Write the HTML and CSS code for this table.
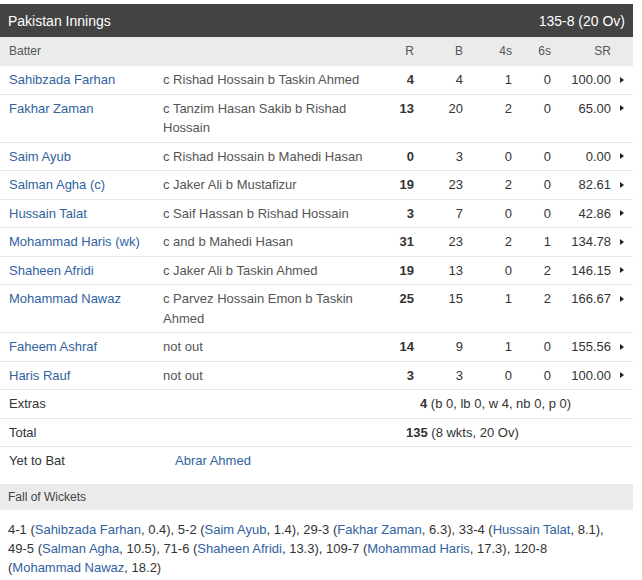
FILE: index.html
```html
<!DOCTYPE html>
<html lang="en">
<head>
<meta charset="utf-8">
<title>Pakistan Innings</title>
<link rel="stylesheet" href="styles.css">
</head>
<body>
<div class="card">
  <div class="inn-head"><span>Pakistan Innings</span><span>135-8 (20 Ov)</span></div>
  <table class="bat">
    <colgroup>
      <col class="w-name"><col class="w-dis"><col class="w-r"><col class="w-b"><col class="w-4"><col class="w-6"><col class="w-sr"><col class="w-arr">
    </colgroup>
    <thead>
      <tr><th class="name">Batter</th><th></th><th class="num">R</th><th class="num">B</th><th class="num">4s</th><th class="num">6s</th><th class="num">SR</th><th></th></tr>
    </thead>
    <tbody>
      <tr><td class="name"><a href="#">Sahibzada Farhan</a></td><td class="dis">c Rishad Hossain b Taskin Ahmed</td><td class="num runs">4</td><td class="num">4</td><td class="num">1</td><td class="num">0</td><td class="num">100.00</td><td class="arr"><span class="tri"></span></td></tr>
      <tr><td class="name"><a href="#">Fakhar Zaman</a></td><td class="dis">c Tanzim Hasan Sakib b Rishad Hossain</td><td class="num runs">13</td><td class="num">20</td><td class="num">2</td><td class="num">0</td><td class="num">65.00</td><td class="arr"><span class="tri"></span></td></tr>
      <tr><td class="name"><a href="#">Saim Ayub</a></td><td class="dis">c Rishad Hossain b Mahedi Hasan</td><td class="num runs">0</td><td class="num">3</td><td class="num">0</td><td class="num">0</td><td class="num">0.00</td><td class="arr"><span class="tri"></span></td></tr>
      <tr><td class="name"><a href="#">Salman Agha (c)</a></td><td class="dis">c Jaker Ali b Mustafizur</td><td class="num runs">19</td><td class="num">23</td><td class="num">2</td><td class="num">0</td><td class="num">82.61</td><td class="arr"><span class="tri"></span></td></tr>
      <tr><td class="name"><a href="#">Hussain Talat</a></td><td class="dis">c Saif Hassan b Rishad Hossain</td><td class="num runs">3</td><td class="num">7</td><td class="num">0</td><td class="num">0</td><td class="num">42.86</td><td class="arr"><span class="tri"></span></td></tr>
      <tr><td class="name"><a href="#">Mohammad Haris (wk)</a></td><td class="dis">c and b Mahedi Hasan</td><td class="num runs">31</td><td class="num">23</td><td class="num">2</td><td class="num">1</td><td class="num">134.78</td><td class="arr"><span class="tri"></span></td></tr>
      <tr><td class="name"><a href="#">Shaheen Afridi</a></td><td class="dis">c Jaker Ali b Taskin Ahmed</td><td class="num runs">19</td><td class="num">13</td><td class="num">0</td><td class="num">2</td><td class="num">146.15</td><td class="arr"><span class="tri"></span></td></tr>
      <tr><td class="name"><a href="#">Mohammad Nawaz</a></td><td class="dis">c Parvez Hossain Emon b Taskin Ahmed</td><td class="num runs">25</td><td class="num">15</td><td class="num">1</td><td class="num">2</td><td class="num">166.67</td><td class="arr"><span class="tri"></span></td></tr>
      <tr><td class="name"><a href="#">Faheem Ashraf</a></td><td class="dis">not out</td><td class="num runs">14</td><td class="num">9</td><td class="num">1</td><td class="num">0</td><td class="num">155.56</td><td class="arr"><span class="tri"></span></td></tr>
      <tr><td class="name"><a href="#">Haris Rauf</a></td><td class="dis">not out</td><td class="num runs">3</td><td class="num">3</td><td class="num">0</td><td class="num">0</td><td class="num">100.00</td><td class="arr"><span class="tri"></span></td></tr>
      <tr class="sum"><td class="name" colspan="2">Extras</td><td class="extras-val" colspan="6"><b>4</b> (b 0, lb 0, w 4, nb 0, p 0)</td></tr>
      <tr class="sum"><td class="name" colspan="2">Total</td><td class="total-val" colspan="6"><b>135</b> (8 wkts, 20 Ov)</td></tr>
      <tr class="sum last"><td class="name">Yet to Bat</td><td class="ytb" colspan="7"><a href="#">Abrar Ahmed</a></td></tr>
    </tbody>
  </table>
  <div class="fow-head">Fall of Wickets</div>
  <p class="fow">4-1 (<a href="#">Sahibzada Farhan</a>, 0.4), 5-2 (<a href="#">Saim Ayub</a>, 1.4), 29-3 (<a href="#">Fakhar Zaman</a>, 6.3), 33-4 (<a href="#">Hussain Talat</a>, 8.1), 49-5 (<a href="#">Salman Agha</a>, 10.5), 71-6 (<a href="#">Shaheen Afridi</a>, 13.3), 109-7 (<a href="#">Mohammad Haris</a>, 17.3), 120-8 (<a href="#">Mohammad Nawaz</a>, 18.2)</p>
</div>
</body>
</html>
```
FILE: styles.css
```css
html, body {
  margin: 0;
  padding: 0;
  background: #fff;
}
body {
  font-family: "Liberation Sans", Arial, sans-serif;
  font-size: 13px;
  color: #333;
}
a {
  color: #31629f;
  text-decoration: none;
}
.card {
  width: 633px;
  padding-top: 4px;
}
.inn-head {
  display: flex;
  justify-content: space-between;
  background: #434343;
  color: #fff;
  font-size: 14px;
  line-height: 20px;
  padding: 7px 8px 6px 8px;
}
.bat {
  width: 633px;
  table-layout: fixed;
  border-collapse: collapse;
}
.w-name { width: 155px; }
.w-dis { width: 226px; }
.w-r { width: 41px; }
.w-b { width: 49px; }
.w-4 { width: 49px; }
.w-6 { width: 39px; }
.w-sr { width: 60px; }
.w-arr { width: 14px; }
.bat th {
  background: #ebebeb;
  color: #555;
  font-weight: normal;
  font-size: 12px;
  line-height: 21px;
  padding: 4px 8px 4px 8px;
  text-align: left;
}
.bat td {
  line-height: 19.5px;
  padding: 4px 8px;
  vertical-align: top;
  border-bottom: 1px solid #e8e8e8;
}
.bat td.name, .bat th.name {
  padding-left: 9px;
}
.bat td.dis {
  color: #555;
}
.bat .num {
  text-align: right;
  padding-left: 0;
}
.bat th.num {
  padding-left: 0;
  text-align: right;
}
.bat td.runs {
  font-weight: bold;
}
.bat td.arr {
  padding: 4px 0 4px 1px;
}
.tri {
  display: inline-block;
  width: 0;
  height: 0;
  border-left: 4px solid #222;
  border-top: 3.5px solid transparent;
  border-bottom: 3.5px solid transparent;
  vertical-align: middle;
  margin-top: -2px;
}
.bat td.extras-val {
  padding-left: 39px;
}
.bat td.total-val {
  padding-left: 25px;
}
.bat td.ytb {
  padding-left: 20px;
}
.bat tr.last td {
  border-bottom: none;
}
.fow-head {
  margin-top: 9px;
  background: #ebebeb;
  color: #444;
  font-size: 12px;
  line-height: 20px;
  padding: 3px 8px;
}
.fow {
  margin: 10px 0 0 0;
  padding: 0 14px 0 8px;
  line-height: 19px;
}
```
